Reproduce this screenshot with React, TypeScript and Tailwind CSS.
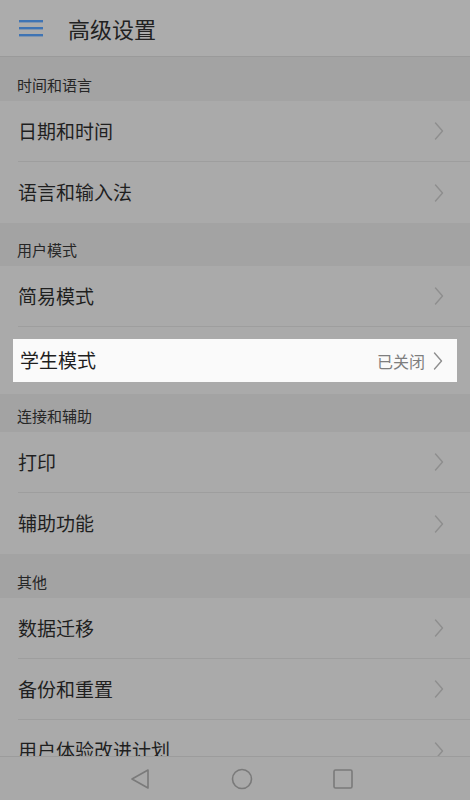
import React from "react";

const font = { fontFamily: '"Noto Sans CJK SC", "Noto Sans", sans-serif' };

function Chevron({ className = "" }: { className?: string }) {
  return (
    <svg width="10" height="20" viewBox="0 0 10 20" className={className} fill="none">
      <path d="M1.5 2 L8.5 10 L1.5 18" stroke="#8e8e8e" strokeWidth="1.4" strokeLinecap="round" strokeLinejoin="round" />
    </svg>
  );
}

function Section({ title, h = "h-[42px]" }: { title: string; h?: string }) {
  return (
    <div className={`flex items-end ${h} bg-[#a3a3a3] px-[17px] pb-[5px] text-[15px] text-[#262626]`}>
      <span>{title}</span>
    </div>
  );
}

function Row({ label, last = false, value }: { label: string; last?: boolean; value?: string }) {
  return (
    <div className="bg-[#aaaaaa] pl-[18px]">
      <div className={`flex h-[61px] items-center pr-[26px] ${last ? "" : "border-b border-[#9e9e9e]"}`}>
        <span className="flex-1 text-[19px] text-[#1f1f1f]">{label}</span>
        {value && <span className="mr-[10px] text-[16px] text-[#7e7e7e]">{value}</span>}
        <Chevron />
      </div>
    </div>
  );
}

export default function App() {
  return (
    <div className="relative h-[800px] w-[470px] overflow-hidden bg-[#aaaaaa]" style={font}>
      <div className="flex h-[57px] items-center border-b border-[#9a9a9a] bg-[#acacac] pl-[19px]">
        <svg width="24" height="18" viewBox="0 0 24 18">
          <rect x="0" y="1" width="24" height="2.4" fill="#3f74b4" />
          <rect x="0" y="8" width="24" height="2.4" fill="#3f74b4" />
          <rect x="0" y="15" width="24" height="2.4" fill="#3f74b4" />
        </svg>
        <span className="ml-[25px] text-[22px] text-[#222]">高级设置</span>
      </div>
      <Section title="时间和语言" h="h-[44px]" />
      <Row label="日期和时间" />
      <Row label="语言和输入法" last />
      <Section title="用户模式" h="h-[43px]" />
      <Row label="简易模式" />
      <div className="bg-[#aaaaaa] px-[13px] py-[12px]">
        <div className="flex h-[43px] items-center bg-[#fafafa] pl-[7px] pr-[14px]">
          <span className="flex-1 text-[19px] text-[#1f1f1f]">学生模式</span>
          <span className="mr-[8px] text-[16px] text-[#7e7e7e]">已关闭</span>
          <Chevron />
        </div>
      </div>
      <Section title="连接和辅助" h="h-[38px]" />
      <Row label="打印" />
      <Row label="辅助功能" last />
      <Section title="其他" h="h-[44px]" />
      <Row label="数据迁移" />
      <Row label="备份和重置" />
      <Row label="用户体验改进计划" last />
      <div className="absolute bottom-0 left-0 flex h-[44px] w-full items-center border-t border-[#9c9c9c] bg-[#a9a9a9]">
        <div className="flex w-full items-center justify-center gap-[80px] pl-[12px]">
          <svg width="22" height="22" viewBox="0 0 22 22" fill="none">
            <path d="M19 2 L3 11 L19 20 Z" stroke="#7a7a7a" strokeWidth="1.6" strokeLinejoin="round" />
          </svg>
          <svg width="22" height="22" viewBox="0 0 22 22" fill="none">
            <circle cx="11" cy="11" r="9.5" stroke="#7a7a7a" strokeWidth="1.6" />
          </svg>
          <svg width="20" height="20" viewBox="0 0 20 20" fill="none">
            <rect x="1" y="1" width="18" height="18" rx="1.5" stroke="#7a7a7a" strokeWidth="1.6" />
          </svg>
        </div>
      </div>
    </div>
  );
}
